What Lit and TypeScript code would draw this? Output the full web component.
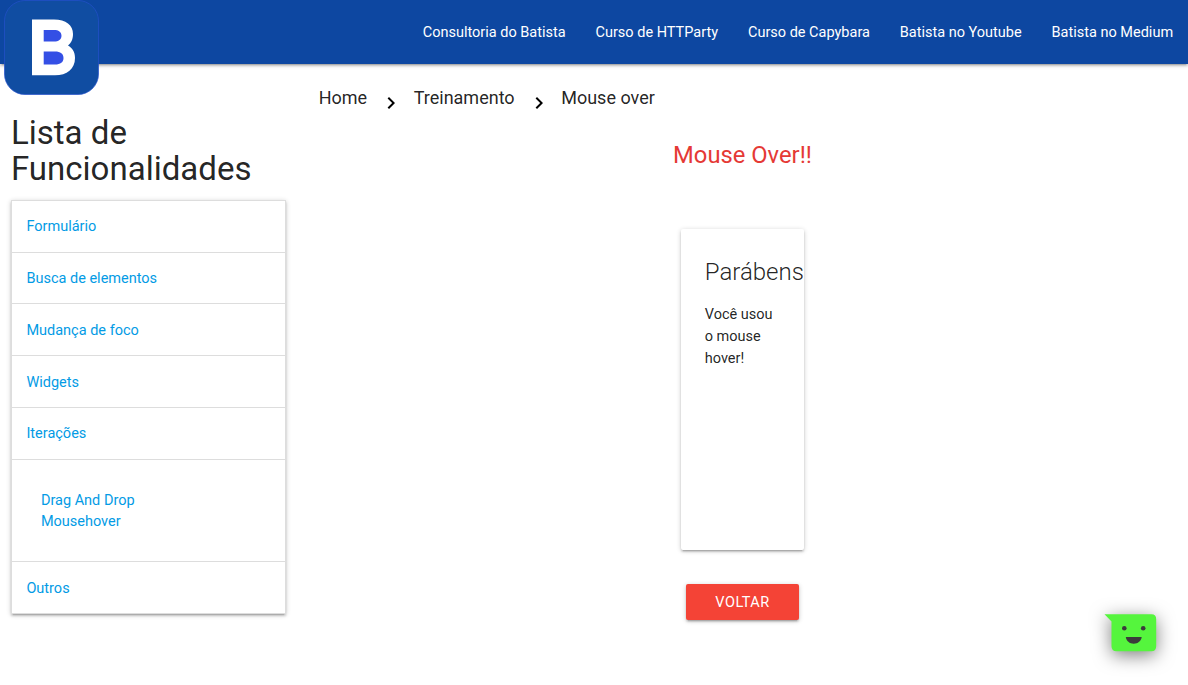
import { LitElement, html, css } from 'lit';
import { customElement } from 'lit/decorators.js';

const NAV = ['Consultoria do Batista', 'Curso de HTTParty', 'Curso de Capybara', 'Batista no Youtube', 'Batista no Medium'];
const SECTIONS: { title: string; items?: string[] }[] = [
  { title: 'Formulário' },
  { title: 'Busca de elementos' },
  { title: 'Mudança de foco' },
  { title: 'Widgets' },
  { title: 'Iterações', items: ['Drag And Drop', 'Mousehover'] },
  { title: 'Outros' },
];
const CRUMBS = ['Home', 'Treinamento', 'Mouse over'];

@customElement('app-root')
export class AppRoot extends LitElement {
  static styles = css`
    :host {
      display: block;
      height: 685px;
      overflow: hidden;
      position: relative;
      background: #fff;
      font: 14.5px/1.5 Roboto, sans-serif;
      color: rgba(0, 0, 0, 0.87);
      --z1: 0 2px 2px 0 rgba(0, 0, 0, 0.14), 0 3px 1px -2px rgba(0, 0, 0, 0.12), 0 1px 5px 0 rgba(0, 0, 0, 0.2);
    }
    * { box-sizing: border-box; }
    a { color: inherit; text-decoration: none; }
    ul { list-style: none; margin: 0; padding: 0; }
    .nav {
      height: 64px;
      padding-top: 1px;
      background: #0d47a1;
      box-shadow: var(--z1);
      display: flex;
      justify-content: flex-end;
      line-height: 64px;
      color: #fff;
    }
    .nav a { padding: 0 14.9px 0 15px; white-space: nowrap; }
    .logo { position: absolute; left: 4px; top: 0; width: 95px; height: 95px; }
    .layout { display: grid; grid-template-columns: 1fr 3fr; }
    .side { padding: 51px 10.875px 0; }
    .side h4 { font-size: 33.06px; line-height: 110%; font-weight: 400; margin: 0 0 12.2px; }
    .menu { border: 1px solid #ddd; border-bottom: 0; box-shadow: var(--z1); color: #039be5; }
    .head { display: block; padding: 15.5px 14.5px 13.5px; border-bottom: 1px solid #ddd; }
    .body { padding: 30px 29px 28px; border-bottom: 1px solid #ddd; }
    .body a { display: block; }
    .main { display: flex; flex-direction: column; align-items: center; padding: 20px 10.875px 0; }
    .crumbs { align-self: stretch; display: flex; padding-left: 10.8px; font-size: 18px; line-height: 27px; }
    .chev { width: 24px; height: 24px; margin: 6.5px 10.6px 0 12px; fill: #000; }
    .main h5 { font-size: 23.78px; line-height: 110%; font-weight: 400; margin: 27.5px 0 0; color: #e53935; }
    .card { width: 123.5px; height: 321px; margin-top: 61px; padding: 25px 24px 23px; border-radius: 2px; box-shadow: var(--z1); }
    .title { display: block; font-size: 24px; font-weight: 300; line-height: 36px; margin-bottom: 14px; white-space: nowrap; }
    .card p { margin: 0; line-height: 22px; }
    .btn {
      margin-top: 34px; height: 36px; padding: 1px 29px 0; border-radius: 2px; line-height: 36px;
      background: #f44336; color: #fff; letter-spacing: 0.5px; box-shadow: var(--z1);
    }
    .chat { position: absolute; left: 1090px; top: 595px; width: 98px; height: 90px; overflow: visible; }
    .bubble { filter: drop-shadow(0 4px 9px rgba(0, 0, 0, 0.5)); }
  `;

  render() {
    return html`
      <nav class="nav">${NAV.map((n) => html`<a href="#">${n}</a>`)}</nav>
      <svg class="logo" viewBox="0 0 95 95">
        <rect x=".5" y=".5" width="94" height="94" rx="20.5" fill="#104da2" stroke="#2450cc" stroke-width=".7" />
        <path fill="#fff" d="M28 19.5H50C62 19.5 69 25 69 34C69 39.5 67 43 64 45.5C68.500 48 71 52 71 58C71 69 63 75.300 51 75.300H28Z" />
        <path fill="#344fe5" d="M39.700 30H50C54.500 30 57.500 32 57.500 35.700C57.500 39.300 54.500 41.500 50 41.500H39.700ZM39.700 51.500H51C56.500 51.500 59.500 53.700 59.500 58C59.500 62.300 56.500 64.500 51 64.500H39.700Z" />
      </svg>
      <div class="layout">
        <aside class="side">
          <h4>Lista de Funcionalidades</h4>
          <ul class="menu">
            ${SECTIONS.map((s) => html`<li>
              <a class="head" href="#">${s.title}</a>
              ${s.items ? html`<div class="body">${s.items.map((i) => html`<a href="#">${i}</a>`)}</div>` : ''}
            </li>`)}
          </ul>
        </aside>
        <main class="main">
          <div class="crumbs">
            ${CRUMBS.map((c, i) => html`${i
              ? html`<svg class="chev" viewBox="0 0 24 24"><path d="M10 6 8.590 7.410 13.170 12l-4.580 4.590L10 18l6-6z" /></svg>`
              : ''}<a href="#">${c}</a>`)}
          </div>
          <h5>Mouse Over!!</h5>
          <section class="card">
            <span class="title">Parábens</span>
            <p>Você usou o mouse hover!</p>
          </section>
          <a class="btn" href="#">VOLTAR</a>
        </main>
      </div>
      <svg class="chat" viewBox="0 0 98 90">
        <path class="bubble" fill="#55f53d" d="M14.500 19.200H61.500Q66.200 19.200 66.200 24.200V51.200Q66.200 56.200 61.500 56.200H26.500Q21.500 56.200 21.500 51.200V26.500Z" />
        <circle cx="34.300" cy="33.300" r="2.300" fill="#3b3b3b" />
        <circle cx="53.200" cy="33.300" r="2.300" fill="#3b3b3b" />
        <path fill="#3b3b3b" d="M35.800 42H51.700C51.200 46 47.800 48.700 43.700 48.700S36.300 46 35.800 42Z" />
      </svg>
    `;
  }
}
